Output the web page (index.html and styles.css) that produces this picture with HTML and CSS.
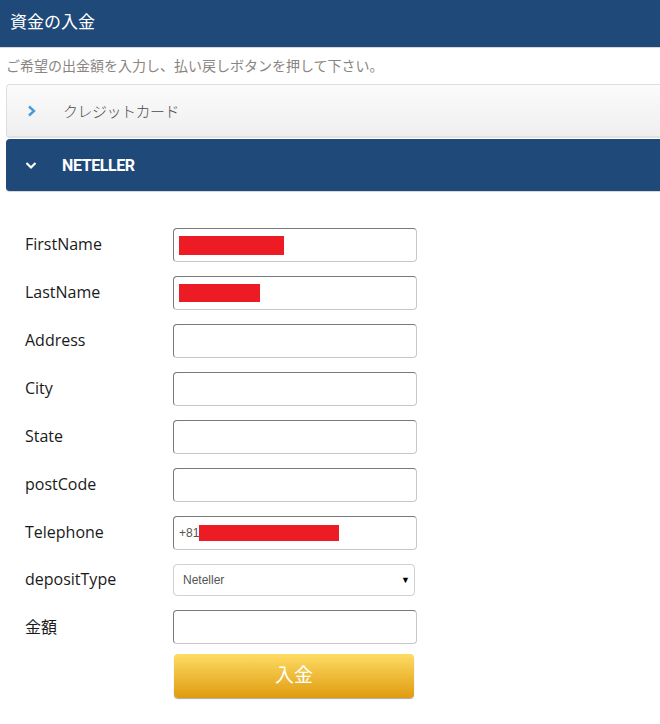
FILE: index.html
```html
<!DOCTYPE html>
<html lang="ja">
<head>
    <meta charset="UTF-8">
    <title>資金の入金</title>
    <link rel="stylesheet" href="styles.css">
</head>
<body>
<div id="head">資金の入金</div>
<p class="note">ご希望の出金額を入力し、払い戻しボタンを押して下さい。</p>
<div class="panel closed">
    <span class="chev">
        <svg width="10" height="12" viewBox="0 0 10 12"><path d="M2 1.5 L7 6 L2 10.5" fill="none" stroke="#4a9ad6" stroke-width="2.4"/></svg>
    </span>
    <span class="ptitle">クレジットカード</span>
</div>
<div class="panel open">
    <span class="chev">
        <svg width="12" height="10" viewBox="0 0 12 10"><path d="M1.5 3 L6 7.5 L10.5 3" fill="none" stroke="#fff" stroke-width="2.2"/></svg>
    </span>
    <span class="ptitle">NETELLER</span>
</div>
<div id="form">
    <div class="row">
        <label>FirstName</label>
        <div class="input"><span class="redact" style="width: 105px; height: 19px;"></span></div>
    </div>
    <div class="row">
        <label>LastName</label>
        <div class="input"><span class="redact" style="width: 81px; height: 18px;"></span></div>
    </div>
    <div class="row">
        <label>Address</label>
        <div class="input"></div>
    </div>
    <div class="row">
        <label>City</label>
        <div class="input"></div>
    </div>
    <div class="row">
        <label>State</label>
        <div class="input"></div>
    </div>
    <div class="row">
        <label>postCode</label>
        <div class="input"></div>
    </div>
    <div class="row">
        <label>Telephone</label>
        <div class="input"><span class="val">+81</span><span class="redact" style="width: 140px; height: 16px;"></span></div>
    </div>
    <div class="row">
        <label>depositType</label>
        <div class="select"><span class="val">Neteller</span><span class="arrow">&#9660;</span></div>
    </div>
    <div class="row">
        <label>金額</label>
        <div class="input"></div>
    </div>
    <div class="row btnrow">
        <a href="javascript:;" class="btn">入金</a>
    </div>
</div>
</body>
</html>
```

FILE: styles.css
```css
body {
    margin: 0;
    font-family: "Liberation Sans", "Noto Sans CJK JP", sans-serif;
    background: #fff;
    overflow: hidden;
}

#head {
    height: 47px;
    line-height: 45px;
    padding-left: 10px;
    background-color: #1f4979;
    border-bottom: 1px solid #d8d8d8;
    color: #fff;
    font-size: 17px;
}

.note {
    margin: 9px 0 9px 6px;
    font-size: 14px;
    color: #8a8580;
    line-height: 18px;
}

.panel {
    display: flex;
    align-items: center;
    margin-left: 6px;
    height: 52px;
    border-radius: 4px 0 0 4px;
}

.panel .chev {
    width: 50px;
    margin-right: 6px;
    display: flex;
    justify-content: center;
}

.closed {
    background: linear-gradient(#fbfbfb, #efefef);
    border: 1px solid #dedede;
    border-right: none;
    border-bottom: 2px solid #e2e2e2;
    height: 51px;
}

.closed .ptitle {
    font-size: 15px;
    letter-spacing: -0.5px;
    color: #4a4a4a;
    font-weight: 300;
}

.open {
    margin-top: 1px;
    background-color: #1f4979;
    border-bottom: 1px solid #d8d8d8;
}

.open .ptitle {
    font-family: Roboto, "Liberation Sans", sans-serif;
    font-weight: bold;
    font-size: 16px;
    letter-spacing: -0.4px;
    color: #fff;
}

#form {
    padding: 36px 0 20px 25px;
    display: flex;
    flex-direction: column;
    gap: 14px;
}

.row {
    display: flex;
    align-items: center;
}

.row label {
    width: 148px;
    font-family: "Open Sans", "Noto Sans CJK JP", sans-serif;
    font-size: 16px;
    color: #1a1a1a;
    margin-top: -2px;
}

.input {
    height: 32px;
    width: 237px;
    padding-left: 5px;
    border: 1px solid #c8c8c8;
    border-top-color: #7a7a7a;
    border-left-color: #7a7a7a;
    border-radius: 4px;
    display: flex;
    align-items: center;
}

.redact {
    display: inline-block;
    background-color: #ed1c24;
}

.val {
    font-size: 12px;
    color: #555;
}

.select {
    width: 227px;
    height: 30px;
    padding: 0 4px 0 9px;
    border: 1px solid #d0d0d0;
    border-radius: 4px;
    display: flex;
    align-items: center;
    justify-content: space-between;
}

.arrow {
    font-size: 9px;
    color: #000;
}

.btnrow {
    margin-top: -4px;
    padding-left: 149px;
}

.btn {
    display: block;
    width: 240px;
    height: 44px;
    line-height: 44px;
    text-align: center;
    text-decoration: none;
    color: #fff;
    font-size: 19px;
    border-radius: 4px;
    background: linear-gradient(#fddc63, #e09b10);
    box-shadow: 0 1px 1px #aaa;
}
```
